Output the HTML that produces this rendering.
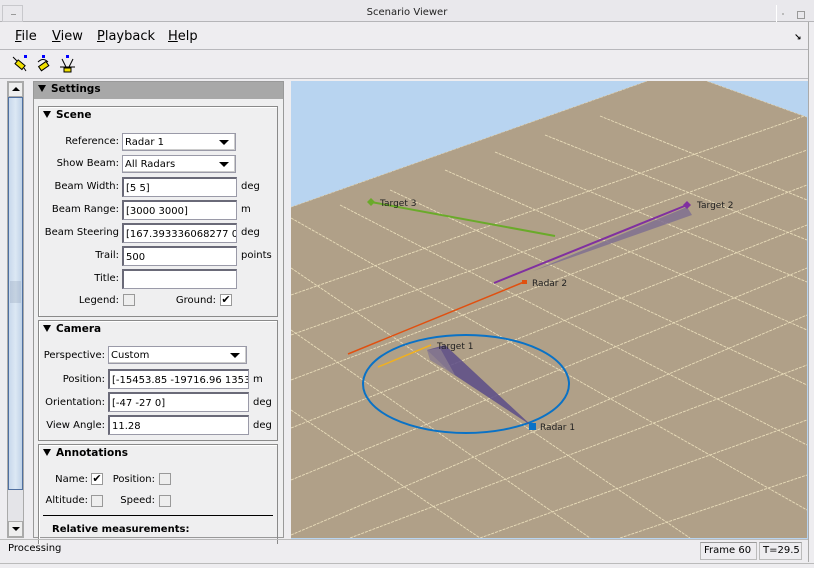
<!DOCTYPE html>
<html><head><meta charset="utf-8">
<style>
*{margin:0;padding:0;box-sizing:border-box}
body{width:814px;height:568px;background:#eeedf0;font-family:"DejaVu Sans","Liberation Sans",sans-serif;font-size:10px;color:#000;position:relative;overflow:hidden}
.a{position:absolute}
.lbl{position:absolute;text-align:right;white-space:nowrap;font-size:10px}
.in{position:absolute;background:#fff;border:1px solid #9a9aa8;border-top:2px solid #6a6a78;border-left:2px solid #6a6a78;height:20px;padding:3px 2px 0;font-size:10px;line-height:13px;white-space:nowrap;overflow:hidden}
.cb{position:absolute;background:#fff;border:1px solid #9a9aa8;height:18px;padding:2px 2px;font-size:10px;line-height:13px;box-shadow:inset -1px -1px 0 #ccc}
.cb:after{content:"";position:absolute;right:6px;top:6px;border-left:5px solid transparent;border-right:5px solid transparent;border-top:5px solid #000}
.chk{position:absolute;width:12px;height:12px;border:1px solid #999;background:#eee}
.grp{position:absolute;border:1px solid #8a8a8a;box-shadow:inset 1px 1px 0 #fff}
.hd{position:absolute;font-weight:bold;font-size:10.5px}
.tri{display:inline-block;border-left:4px solid transparent;border-right:4px solid transparent;border-top:7px solid #000;margin-right:5px;vertical-align:0}
.unit{position:absolute;font-size:10px}
</style></head><body>
<!-- title bar -->
<div class="a" style="left:0;top:0;width:814px;height:22px;background:#e9e8ec;border-bottom:1px solid #b5b5b8"></div>
<div class="a" style="left:2px;top:5px;width:21px;height:17px;border:1px solid #c8c8cc"></div>
<div class="a" style="left:11px;top:14px;width:5px;height:1px;background:#999"></div>
<div class="a" style="left:0;top:7px;width:814px;text-align:center;font-size:10px;color:#222">Scenario Viewer</div>
<div class="a" style="left:776px;top:5px;width:16px;height:17px;border-left:1px solid #fff"></div>
<div class="a" style="left:782px;top:13px;width:2px;height:2px;background:#bbb"></div>
<div class="a" style="left:797px;top:11px;width:8px;height:8px;border:1px solid #999"></div>
<!-- menu -->
<div class="a" style="left:15px;top:29px;font-size:13px"><u>F</u>ile</div>
<div class="a" style="left:52px;top:29px;font-size:13px"><u>V</u>iew</div>
<div class="a" style="left:97px;top:29px;font-size:13px"><u>P</u>layback</div>
<div class="a" style="left:168px;top:29px;font-size:13px"><u>H</u>elp</div>
<div class="a" style="left:794px;top:33px;font-size:9px;font-weight:bold">↘</div>
<div class="a" style="left:0;top:49px;width:808px;height:1px;background:#b8b8bc"></div>
<!-- toolbar icons -->
<svg class="a" style="left:10px;top:54px" width="70" height="20">
<line x1="3" y1="3" x2="9" y2="9" stroke="#000"/><rect x="6" y="8" width="9" height="5" fill="#f0e000" stroke="#000" transform="rotate(40 10 10)"/><rect x="14" y="1" width="3" height="3" fill="#0000ff"/><line x1="14" y1="14" x2="16" y2="17" stroke="#000"/>
<path d="M28 8 Q33 3 38 8" fill="none" stroke="#000"/><rect x="32" y="1" width="3" height="3" fill="#0000ff"/><rect x="29" y="10" width="9" height="5" fill="#f0e000" stroke="#000" transform="rotate(-35 33 12)"/>
<rect x="56" y="1" width="3" height="3" fill="#0000ff"/><path d="M52 5 L56 13 M63 5 L59 13 M50 13 H65" stroke="#000" fill="none"/><rect x="54" y="14" width="7" height="4" fill="#f0e000" stroke="#000"/>
</svg>
<div class="a" style="left:0;top:78px;width:808px;height:1px;background:#b8b8bc"></div>
<!-- left scrollbar -->
<div class="a" style="left:7px;top:81px;width:17px;height:457px;background:#e4e4e8;border:1px solid #aaa"></div>
<div class="a" style="left:8px;top:82px;width:15px;height:15px;background:#eee;border:1px solid #aaa"></div>
<div class="a" style="left:12px;top:87px;border-left:4px solid transparent;border-right:4px solid transparent;border-bottom:4px solid #000"></div>
<div class="a" style="left:8px;top:97px;width:15px;height:393px;background:linear-gradient(90deg,#c8d8ec,#dce8f4 50%,#c0d2e8);border:1px solid #5070a0"></div>
<div class="a" style="left:10px;top:281px;width:11px;height:22px;background-image:radial-gradient(#8090a8 40%,transparent 45%);background-size:2px 2px"></div>
<div class="a" style="left:8px;top:521px;width:15px;height:16px;background:#eee;border:1px solid #aaa"></div>
<div class="a" style="left:12px;top:527px;border-left:4px solid transparent;border-right:4px solid transparent;border-top:4px solid #000"></div>
<!-- settings panel -->
<div class="a" style="left:33px;top:81px;width:251px;height:457px;border:1px solid #999;background:#efeff0"></div>
<div class="a" style="left:34px;top:82px;width:249px;height:17px;background:#a8a8a8"></div>
<div class="hd" style="left:38px;top:83px"><span class="tri"></span>Settings</div>
<!-- Scene -->
<div class="grp" style="left:38px;top:106px;width:240px;height:211px"></div>
<div class="hd" style="left:43px;top:109px"><span class="tri"></span>Scene</div>
<div class="lbl" style="left:0;width:119px;top:136px">Reference:</div><div class="cb" style="left:122px;top:133px;width:114px">Radar 1</div>
<div class="lbl" style="left:0;width:119px;top:158px">Show Beam:</div><div class="cb" style="left:122px;top:155px;width:114px">All Radars</div>
<div class="lbl" style="left:0;width:119px;top:181px">Beam Width:</div><div class="in" style="left:122px;top:177px;width:115px">[5 5]</div><div class="unit" style="left:241px;top:181px">deg</div>
<div class="lbl" style="left:0;width:119px;top:204px">Beam Range:</div><div class="in" style="left:122px;top:200px;width:115px">[3000 3000]</div><div class="unit" style="left:241px;top:204px">m</div>
<div class="lbl" style="left:0;width:119px;top:227px">Beam Steering</div><div class="in" style="left:122px;top:223px;width:115px">[167.393336068277 0;-</div><div class="unit" style="left:241px;top:227px">deg</div>
<div class="lbl" style="left:0;width:119px;top:250px">Trail:</div><div class="in" style="left:122px;top:246px;width:115px">500</div><div class="unit" style="left:241px;top:250px">points</div>
<div class="lbl" style="left:0;width:119px;top:273px">Title:</div><div class="in" style="left:122px;top:269px;width:115px"></div>
<div class="lbl" style="left:0;width:119px;top:295px">Legend:</div><div class="chk" style="left:123px;top:294px"></div>
<div class="lbl" style="left:0;width:216px;top:295px">Ground:</div><div class="chk" style="left:220px;top:294px;background:#fff;font-size:11px;line-height:10px;text-align:center">✔</div>
<!-- Camera -->
<div class="grp" style="left:38px;top:320px;width:240px;height:121px"></div>
<div class="hd" style="left:43px;top:323px"><span class="tri"></span>Camera</div>
<div class="lbl" style="left:0;width:105px;top:350px">Perspective:</div><div class="cb" style="left:108px;top:346px;width:139px">Custom</div>
<div class="lbl" style="left:0;width:105px;top:374px">Position:</div><div class="in" style="left:108px;top:369px;width:141px">[-15453.85 -19716.96 13539</div><div class="unit" style="left:253px;top:374px">m</div>
<div class="lbl" style="left:0;width:105px;top:397px">Orientation:</div><div class="in" style="left:108px;top:392px;width:141px">[-47 -27 0]</div><div class="unit" style="left:253px;top:397px">deg</div>
<div class="lbl" style="left:0;width:105px;top:420px">View Angle:</div><div class="in" style="left:108px;top:415px;width:141px">11.28</div><div class="unit" style="left:253px;top:420px">deg</div>
<!-- Annotations -->
<div class="grp" style="left:38px;top:444px;width:240px;height:100px;border-bottom:none"></div>
<div class="hd" style="left:43px;top:447px"><span class="tri"></span>Annotations</div>
<div class="lbl" style="left:0;width:88px;top:474px">Name:</div><div class="chk" style="left:91px;top:473px;background:#fff;font-size:11px;line-height:10px;text-align:center">✔</div>
<div class="lbl" style="left:0;width:155px;top:474px">Position:</div><div class="chk" style="left:159px;top:473px"></div>
<div class="lbl" style="left:0;width:88px;top:495px">Altitude:</div><div class="chk" style="left:91px;top:495px"></div>
<div class="lbl" style="left:0;width:155px;top:495px">Speed:</div><div class="chk" style="left:159px;top:495px"></div>
<div class="a" style="left:43px;top:515px;width:230px;height:1px;background:#000"></div>
<div class="a" style="left:52px;top:524px;font-weight:bold;font-size:10px">Relative measurements:</div>
<!-- 3D view -->
<svg class="a" style="left:291px;top:81px" width="517" height="458" viewBox="291 81 517 458">
<defs><clipPath id="g"><polygon points="291,207 647,81 707,81 807,117 807,538 291,538"/></clipPath></defs>
<rect x="291" y="81" width="517" height="458" fill="#b8d4f0"/>
<polygon points="291,207 647,81 707,81 807,117 807,538 291,538" fill="#b0a088"/>
<g clip-path="url(#g)" stroke="#f0e4c0" stroke-width="0.9" stroke-dasharray="3,1" opacity="0.9">
<line x1="291" y1="207" x2="647" y2="81"/><line x1="707" y1="81" x2="807" y2="117"/>
<line x1="495" y1="152" x2="807" y2="282"/><line x1="445" y1="170" x2="807" y2="330"/><line x1="390" y1="190" x2="807" y2="385"/><line x1="340" y1="205" x2="807" y2="445"/><line x1="291" y1="218" x2="807" y2="510"/><line x1="291" y1="268" x2="690" y2="538"/><line x1="291" y1="330" x2="590" y2="538"/><line x1="291" y1="410" x2="480" y2="538"/><line x1="545" y1="135" x2="807" y2="240"/><line x1="600" y1="116" x2="807" y2="200"/>
<line x1="291" y1="335" x2="807" y2="150"/><line x1="291" y1="380" x2="807" y2="185"/><line x1="291" y1="428" x2="807" y2="225"/><line x1="291" y1="480" x2="807" y2="268"/><line x1="291" y1="535" x2="807" y2="315"/><line x1="350" y1="538" x2="807" y2="365"/><line x1="480" y1="538" x2="807" y2="420"/><line x1="620" y1="538" x2="807" y2="475"/><line x1="291" y1="295" x2="807" y2="115"/>
</g>
<line x1="371" y1="202" x2="555" y2="236" stroke="#6aaa2a" stroke-width="2"/>
<polygon points="371,198 375,202 371,206 367,202" fill="#6aaa2a"/>
<text x="380" y="206" font-size="9" font-family="DejaVu Sans" fill="#222">Target 3</text>
<polygon points="687,207 692,215 533,271" fill="#807090" opacity="0.85"/>
<line x1="494" y1="283" x2="687" y2="205" stroke="#8030a0" stroke-width="2"/>
<polygon points="687,201 691,205 687,209 683,205" fill="#8030a0"/>
<text x="697" y="208" font-size="9" font-family="DejaVu Sans" fill="#222">Target 2</text>
<line x1="348" y1="354" x2="524" y2="282" stroke="#e05010" stroke-width="1.5"/>
<rect x="522" y="280" width="5" height="4" fill="#e05010"/>
<text x="532" y="286" font-size="9" font-family="DejaVu Sans" fill="#222">Radar 2</text>
<ellipse cx="466" cy="384" rx="103" ry="49" fill="none" stroke="#0a72c6" stroke-width="2"/>
<polygon points="427,350 445,345 532,426 450,372" fill="#5c4c88" opacity="0.85"/>
<polygon points="427,350 440,348 455,375 430,360" fill="#8a7c90" opacity="0.8"/>
<line x1="378" y1="367" x2="431" y2="345" stroke="#f0b020" stroke-width="1.5"/>
<rect x="529" y="423" width="7" height="7" fill="#0a72c6"/>
<text x="437" y="349" font-size="9" font-family="DejaVu Sans" fill="#222">Target 1</text>
<text x="540" y="430" font-size="9" font-family="DejaVu Sans" fill="#222">Radar 1</text>
</svg>
<div class="a" style="left:808px;top:22px;width:1px;height:540px;background:#aaa"></div>
<!-- status bar -->
<div class="a" style="left:0;top:539px;width:808px;height:1px;background:#bbb"></div>
<div class="a" style="left:8px;top:543px;font-size:10px">Processing</div>
<div class="a" style="left:700px;top:542px;width:57px;height:18px;border:1px solid #bbb;border-top-color:#999;padding:2px 3px;font-size:10px">Frame 60</div>
<div class="a" style="left:759px;top:542px;width:43px;height:18px;border:1px solid #bbb;border-top-color:#999;padding:2px 3px;font-size:10px">T=29.5</div>
<div class="a" style="left:0;top:563px;width:814px;height:1px;background:#bbb"></div>
</body></html>
